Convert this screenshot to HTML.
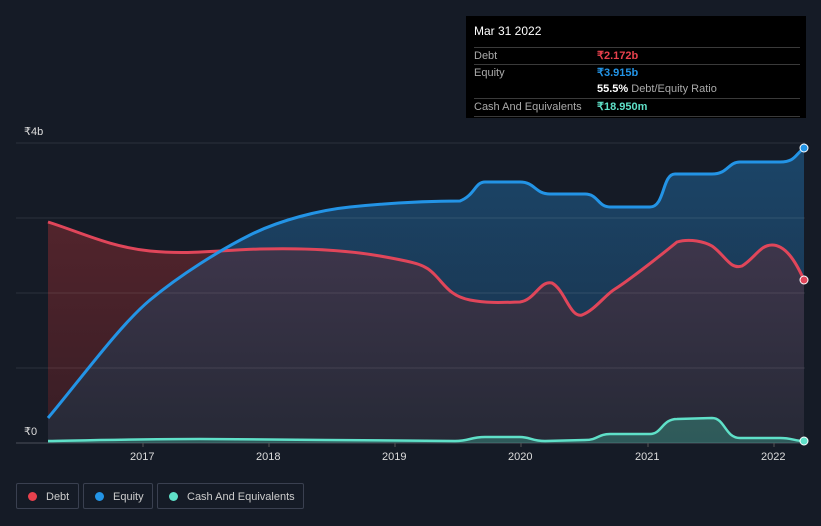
<!DOCTYPE html><html><head><style>
body{margin:0;background:#151b26;width:821px;height:526px;overflow:hidden;font-family:"Liberation Sans",sans-serif;position:relative}
.tt{position:absolute;left:466px;top:16px;width:340px;height:102px;background:#000;color:#fff;font-size:11px}
.row{position:absolute;left:8px;right:6px;border-top:1px solid #3a3a3a;height:17px;line-height:17px}
.l{color:#aaa;position:absolute;left:0}.v{position:absolute;left:123px;font-weight:bold}
.leg{position:absolute;top:483px;height:26px;border:1px solid #3a4050;border-radius:2px;color:#ccc;font-size:11px;line-height:26px;box-sizing:border-box;white-space:nowrap}
.leg i{display:inline-block;width:9px;height:9px;border-radius:50%;margin:0 9px 0 11px;vertical-align:-1px}
.ax{position:absolute;color:#ddd;font-size:11px}
</style></head><body>
<svg width="821" height="526" style="position:absolute;left:0;top:0">
<defs><linearGradient id="eg" x1="0" y1="0" x2="0" y2="1"><stop offset="0" stop-color="#1b4568"/><stop offset="1" stop-color="#1a3048"/></linearGradient>
<linearGradient id="dg" x1="0" y1="0" x2="0" y2="1"><stop offset="0" stop-color="#40374d"/><stop offset="1" stop-color="#262936"/></linearGradient>
<linearGradient id="rg" x1="0" y1="0" x2="0" y2="1"><stop offset="0" stop-color="#52242c"/><stop offset="1" stop-color="#3a1e26"/></linearGradient></defs>
<path d="M48,418 C80,380 120,325 150,300 S220,250 250,235 S320,210 350,207 S420,201 460,201 C475,195 475,182 485,182 L520,182 C535,182 535,194 550,194 L585,194 C598,194 598,207 610,207 L650,207 C665,207 662,174 675,174 L712,174 C728,174 728,162 740,162 L780,162 C795,162 795,155 804,148 L804,443 L48,443Z" fill="url(#eg)"/>
<path d="M48,222 C80,232 110,247 150,251 S220,250 260,249 S340,249 380,256 S425,265 435,275 S450,296 470,300 S510,302 520,302 C535,300 540,280 552,283 C565,290 570,318 582,315 C595,310 605,295 615,289 S655,260 677,242 C690,238 705,242 712,246 C725,255 730,270 742,266 C755,258 760,245 772,245 C785,245 795,260 804,280 L804,443 L48,443Z" fill="url(#dg)"/>
<path d="M48,222 C80,232 110,247 150,251 C180,253 200,252 223,251 C190,268 170,283 150,300 C120,325 80,380 48,418Z" fill="url(#rg)"/>
<g stroke="#ffffff" stroke-opacity=".1" stroke-width="1"><line x1="16" y1="143" x2="805" y2="143"/><line x1="16" y1="218" x2="805" y2="218"/><line x1="16" y1="293" x2="805" y2="293"/><line x1="16" y1="368" x2="805" y2="368"/></g>
<line x1="16" y1="443" x2="805" y2="443" stroke="#4a4f5a"/>
<path d="M48,441 C100,440 140,439 200,439 S400,441 455,441 C470,441 470,437 485,437 L520,437 C530,437 532,441 545,441 L585,440 C598,440 598,434 610,434 L650,434 C662,434 662,419 677,419 L712,418 C725,418 725,438 740,438 L780,438 C792,438 795,441 804,441 L804,443 L48,443Z" fill="#3fb89f" fill-opacity=".35"/>
<path d="M48,222 C80,232 110,247 150,251 S220,250 260,249 S340,249 380,256 S425,265 435,275 S450,296 470,300 S510,302 520,302 C535,300 540,280 552,283 C565,290 570,318 582,315 C595,310 605,295 615,289 S655,260 677,242 C690,238 705,242 712,246 C725,255 730,270 742,266 C755,258 760,245 772,245 C785,245 795,260 804,280" fill="none" stroke="#e0465a" stroke-width="3"/>
<path d="M48,418 C80,380 120,325 150,300 S220,250 250,235 S320,210 350,207 S420,201 460,201 C475,195 475,182 485,182 L520,182 C535,182 535,194 550,194 L585,194 C598,194 598,207 610,207 L650,207 C665,207 662,174 675,174 L712,174 C728,174 728,162 740,162 L780,162 C795,162 795,155 804,148" fill="none" stroke="#2394e6" stroke-width="3"/>
<path d="M48,441 C100,440 140,439 200,439 S400,441 455,441 C470,441 470,437 485,437 L520,437 C530,437 532,441 545,441 L585,440 C598,440 598,434 610,434 L650,434 C662,434 662,419 677,419 L712,418 C725,418 725,438 740,438 L780,438 C792,438 795,441 804,441" fill="none" stroke="#5fe0c8" stroke-width="2.5"/>
<circle cx="804" cy="148" r="4" fill="#2394e6" stroke="#fff" stroke-width="1"/>
<circle cx="804" cy="280" r="4" fill="#e0465a" stroke="#fff" stroke-width="1"/>
<circle cx="804" cy="441" r="4" fill="#5fe0c8" stroke="#fff" stroke-width="1"/>
<g stroke="#555"><line x1="143" y1="443" x2="143" y2="447"/><line x1="269" y1="443" x2="269" y2="447"/><line x1="395" y1="443" x2="395" y2="447"/><line x1="521" y1="443" x2="521" y2="447"/><line x1="648" y1="443" x2="648" y2="447"/><line x1="774" y1="443" x2="774" y2="447"/></g>
</svg>
<div class="ax" style="left:24px;top:125px">₹4b</div>
<div class="ax" style="left:24px;top:425px">₹0</div>
<div class="ax" style="left:130px;top:451px">2017</div><div class="ax" style="left:256px;top:451px">2018</div><div class="ax" style="left:382px;top:451px">2019</div><div class="ax" style="left:508px;top:451px">2020</div><div class="ax" style="left:635px;top:451px">2021</div><div class="ax" style="left:761px;top:451px">2022</div>
<div class="tt">
<div style="position:absolute;left:8px;top:8px;font-size:12px">Mar 31 2022</div>
<div class="row" style="top:31px"><span class="l">Debt</span><span class="v" style="color:#e8414d">₹2.172b</span></div>
<div class="row" style="top:48px"><span class="l">Equity</span><span class="v" style="color:#2394e6">₹3.915b</span></div>
<div class="row" style="top:65px;border:0"><span class="v" style="color:#fff">55.5% <span style="color:#aaa;font-weight:normal">Debt/Equity Ratio</span></span></div>
<div class="row" style="top:82px;border-bottom:1px solid #3a3a3a"><span class="l">Cash And Equivalents</span><span class="v" style="color:#5fe0c8">₹18.950m</span></div>
</div>
<div class="leg" style="left:16px;width:63px"><i style="background:#e8414d"></i>Debt</div>
<div class="leg" style="left:83px;width:70px"><i style="background:#2394e6"></i>Equity</div>
<div class="leg" style="left:157px;width:147px"><i style="background:#5fe0c8"></i>Cash And Equivalents</div>
</body></html>
